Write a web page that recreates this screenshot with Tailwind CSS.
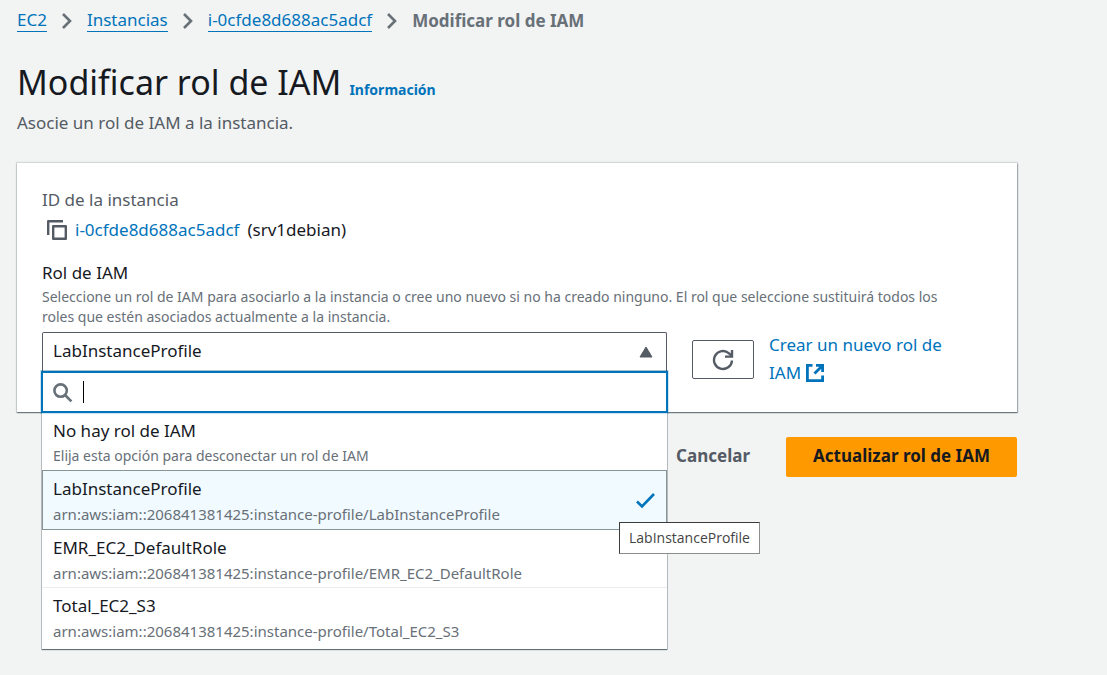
<!DOCTYPE html>
<html lang="es">
<head>
<meta charset="utf-8">
<meta name="viewport" content="width=device-width, initial-scale=1">
<title>Modificar rol de IAM</title>
<script src="https://cdn.jsdelivr.net/npm/@tailwindcss/browser@4"></script>
</head>
<body class="min-h-screen bg-[#f2f3f3] font-['Noto_Sans','Open_Sans',sans-serif] text-[17px] leading-6 text-[#16191f]">
<main class="pt-[9px] pr-[90px] pb-6 pl-[17px]">
  <nav aria-label="Ruta de navegación">
    <ol class="flex items-center gap-3 leading-[22px]">
      <li class="flex items-center gap-3"><a href="#" class="border-b border-[#0073bb] text-[#0073bb]">EC2</a>
        <svg class="h-5 w-4" viewBox="0 0 16 20" fill="none" stroke="#687078" stroke-width="2.6" aria-hidden="true"><path d="M4 3l7 7-7 7"/></svg></li>
      <li class="flex items-center gap-3"><a href="#" class="border-b border-[#0073bb] text-[#0073bb]">Instancias</a>
        <svg class="h-5 w-4" viewBox="0 0 16 20" fill="none" stroke="#687078" stroke-width="2.6" aria-hidden="true"><path d="M4 3l7 7-7 7"/></svg></li>
      <li class="flex items-center gap-3"><a href="#" class="border-b border-[#0073bb] text-[#0073bb]">i-0cfde8d688ac5adcf</a>
        <svg class="h-5 w-4" viewBox="0 0 16 20" fill="none" stroke="#687078" stroke-width="2.6" aria-hidden="true"><path d="M4 3l7 7-7 7"/></svg></li>
      <li class="font-bold text-[#687078]" aria-current="page">Modificar rol de IAM</li>
    </ol>
  </nav>

  <header class="mt-7">
    <div class="flex items-baseline gap-2">
      <h1 class="text-[34px] leading-[44px]">Modificar rol de IAM</h1>
      <a href="#" class="text-sm font-bold text-[#0073bb]">Información</a>
    </div>
    <p class="mt-[7px] text-[#545b64]">Asocie un rol de IAM a la instancia.</p>
  </header>

  <section class="mt-7 bg-white p-[25px] shadow-[0_1px_1px_0_#001c2460,1px_1px_1px_0_#001c2430,0_0_1px_1px_#001c2420]">
    <h2 class="text-[#545b64]">ID de la instancia</h2>
    <div class="mt-1.5 flex items-center">
      <button type="button" aria-label="Copiar" class="ml-1 mr-[7px]">
        <svg class="size-[22px]" viewBox="0 0 22 22" fill="none" stroke="#545b64" stroke-width="2.4" stroke-linejoin="round"><path d="M2.2 16V2.2H17"/><path d="M7.2 7.2h12.6v12.6H7.2z"/></svg>
      </button>
      <a href="#" class="text-[#0073bb]">i-0cfde8d688ac5adcf</a><span class="ml-2">(srv1debian)</span>
    </div>

    <label for="role" class="mt-[19px] block">Rol de IAM</label>
    <p class="mt-0.5 max-w-[928px] text-sm leading-5 text-[#687078]">Seleccione un rol de IAM para asociarlo a la instancia o cree uno nuevo si no ha creado ninguno. El rol que seleccione sustituirá todos los roles que estén asociados actualmente a la instancia.</p>

    <div class="mt-1 flex items-start">
      <div class="relative mt-px flex-1">
        <select id="role" class="block h-10 w-full appearance-none rounded-t-xs border border-b-0 border-[#545b64] bg-white pr-10 pb-1 pl-2.5">
          <option>LabInstanceProfile</option>
        </select>
        <svg class="pointer-events-none absolute top-3.5 right-3.5 h-3 w-3.5" viewBox="0 0 14 12" fill="#545b64" aria-hidden="true"><path d="M7 1l6 10H1z" stroke="#545b64" stroke-linejoin="round"/></svg>

        <div class="absolute inset-x-0 top-[39px] z-10 bg-white shadow-[0_1px_1px_0_#001c2480,0_0_0_1px_#001c2430]">
          <div class="relative -mx-px">
            <input type="text" role="combobox" aria-expanded="true" aria-controls="roles" aria-label="Buscar roles" class="block h-[42px] w-full border-[2px] border-[#0073bb] bg-white pl-10 caret-transparent shadow-[0_0_0_1px_#0073bb30] outline-none">
            <svg class="pointer-events-none absolute top-3 left-3 size-5" viewBox="0 0 20 20" fill="none" stroke="#687078" stroke-width="2.6" aria-hidden="true"><circle cx="7.6" cy="7.6" r="6.2"/><path d="M12 12l6.4 6.4"/></svg>
            <span class="pointer-events-none absolute top-2.5 left-[42px] h-[22px] w-px bg-black"></span>
          </div>
          <ul id="roles" role="listbox" aria-label="Rol de IAM">
            <li role="option" aria-selected="false" class="px-[11px] pt-1.5 pb-1">
              <div>No hay rol de IAM</div>
              <div class="mt-0.5 text-sm leading-[22px] text-[#687078]">Elija esta opción para desconectar un rol de IAM</div>
            </li>
            <li role="option" aria-selected="true" class="relative -mt-px flex items-center justify-between border border-[#879596] bg-[#f1faff] pt-1.5 pr-2 pb-1 pl-2.5">
              <div>
                <div>LabInstanceProfile</div>
                <div class="mt-0.5 text-[15px] leading-[22px] text-[#687078]">arn:aws:iam::206841381425:instance-profile/LabInstanceProfile</div>
              </div>
              <svg class="h-[22px] w-6" viewBox="0 0 24 22" fill="none" stroke="#0073bb" stroke-width="2.6" aria-hidden="true"><path d="M3 11.5l5 5L20 4"/></svg>
              <span role="tooltip" class="absolute top-[51px] left-[576px] z-20 border border-[#8c8c8c] border-t-[#3c3c3c] border-l-[#3c3c3c] bg-white px-[9px] py-[5px] text-sm leading-5 whitespace-nowrap text-[#444] font-['Open_Sans',sans-serif]">LabInstanceProfile</span>
            </li>
            <li role="option" aria-selected="false" class="border-b border-[#eaeded] px-[11px] pt-1.5 pb-[3px]">
              <div>EMR_EC2_DefaultRole</div>
              <div class="mt-0.5 text-[15px] leading-[22px] text-[#687078]">arn:aws:iam::206841381425:instance-profile/EMR_EC2_DefaultRole</div>
            </li>
            <li role="option" aria-selected="false" class="px-[11px] pt-1.5 pb-[7px]">
              <div>Total_EC2_S3</div>
              <div class="mt-0.5 text-[15px] leading-[22px] text-[#687078]">arn:aws:iam::206841381425:instance-profile/Total_EC2_S3</div>
            </li>
          </ul>
        </div>
      </div>
      <button type="button" aria-label="Actualizar lista" class="mt-[9px] ml-[25px] flex h-[39px] w-[62px] items-center justify-center rounded-xs border border-[#545b64] bg-white">
        <svg class="size-[22px]" viewBox="0 0 22 22" fill="none" stroke="#545b64" stroke-width="2.4" aria-hidden="true"><path d="M20 11.5a9 9 0 1 1-3-7.2l2.6 2.4"/><path d="M20 1v6.6h-7"/></svg>
      </button>
      <div class="ml-[15px] w-[223px] leading-7">
        <a href="#" class="block max-w-48 text-[#0073bb]">Crear un nuevo rol de IAM <svg class="inline size-5 align-[-4px]" viewBox="0 0 20 20" fill="none" stroke="#0073bb" stroke-width="2.8" aria-hidden="true"><path d="M7.5 2.4H2.4v15.2h15.2v-5.1"/><path d="M11 2.4h6.6V9M17.3 2.7l-7.8 7.8"/></svg></a>
      </div>
    </div>
  </section>

  <div class="mt-[25px] flex justify-end gap-[11px] font-bold">
    <button type="button" class="h-10 px-[25px] pb-0.5 text-[#545b64]">Cancelar</button>
    <button type="button" class="h-10 rounded-xs bg-[#ff9900] px-[27px] pb-0.5">Actualizar rol de IAM</button>
  </div>
</main>
</body>
</html>
